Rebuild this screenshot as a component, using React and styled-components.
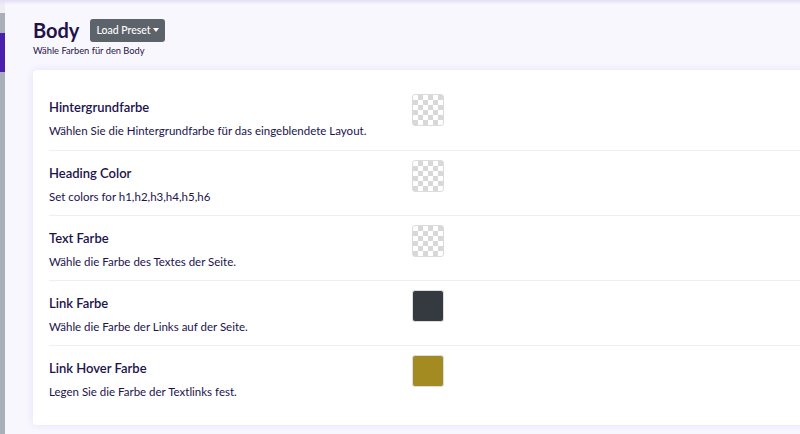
import React from "react";
import styled, { createGlobalStyle } from "styled-components";

const Global = createGlobalStyle`
  html, body {
    margin: 0;
    padding: 0;
    width: 800px;
    height: 434px;
    overflow: hidden;
    background: #f9f7fe;
    font-family: "Lato", "Open Sans", sans-serif;
  }
`;

const rows = [
  { title: "Hintergrundfarbe", text: "Wählen Sie die Hintergrundfarbe für das eingeblendete Layout.", color: null },
  { title: "Heading Color", text: "Set colors for h1,h2,h3,h4,h5,h6", color: null },
  { title: "Text Farbe", text: "Wähle die Farbe des Textes der Seite.", color: null },
  { title: "Link Farbe", text: "Wähle die Farbe der Links auf der Seite.", color: "#343a40" },
  { title: "Link Hover Farbe", text: "Legen Sie die Farbe der Textlinks fest.", color: "#a38a21" },
];

export default function App() {
  return (
    <>
      <Global />
      <Layout>
        <Sidebar>
          <div className="top" />
          <div className="gray" />
          <div className="active" />
          <div className="rest" />
        </Sidebar>
        <Main>
          <Header>
            <TitleRow>
              <h1>Body</h1>
              <PresetButton>
                Load Preset <span className="caret" />
              </PresetButton>
            </TitleRow>
            <Subtitle>Wähle Farben für den Body</Subtitle>
          </Header>
          <Card>
            {rows.map((r, i) => (
              <Row key={r.title} first={i === 0}>
                <Label>
                  <h3>{r.title}</h3>
                  <p>{r.text}</p>
                </Label>
                <Swatch color={r.color} />
              </Row>
            ))}
          </Card>
        </Main>
      </Layout>
    </>
  );
}

const Layout = styled.div`
  display: flex;
  width: 800px;
  height: 434px;
  position: relative;
  &::before {
    content: "";
    position: absolute;
    left: 0;
    right: 0;
    top: 0;
    height: 5px;
    background: linear-gradient(#e4def7, rgba(249, 247, 254, 0));
    z-index: 2;
  }
`;

const Sidebar = styled.div`
  width: 5px;
  flex-shrink: 0;
  display: flex;
  flex-direction: column;
  .top {
    height: 13px;
    background: #eeedf4;
  }
  .gray {
    height: 20px;
    background: #a8afb8;
  }
  .active {
    height: 39px;
    background: #4a1fae;
  }
  .rest {
    flex: 1;
    background: #a8afb8;
  }
`;

const Main = styled.div`
  flex: 1;
  padding: 17px 0 0 28px;
  min-width: 0;
`;

const Header = styled.div`
  color: #1f1249;
`;

const TitleRow = styled.div`
  display: flex;
  align-items: center;
  gap: 11px;
  h1 {
    margin: 0;
    font-size: 20px;
    font-weight: 700;
    line-height: 26px;
    color: #1f1249;
  }
`;

const PresetButton = styled.button`
  display: flex;
  align-items: center;
  gap: 2px;
  height: 23px;
  padding: 0 6px;
  border: none;
  border-radius: 3px;
  background: #5c636a;
  color: #fff;
  font-family: inherit;
  font-size: 10.5px;
  font-weight: 500;
  .caret {
    width: 0;
    height: 0;
    border-left: 3px solid transparent;
    border-right: 3px solid transparent;
    border-top: 4px solid #fff;
    margin-top: -1px;
  }
`;

const Subtitle = styled.div`
  font-size: 9.3px;
  margin-top: 2px;
  color: #1f1249;
`;

const Card = styled.div`
  margin-top: 14px;
  width: 790px;
  background: #fff;
  border-radius: 4px;
  box-shadow: 0 0 10px rgba(120, 90, 220, 0.14);
  padding: 15px 0 15px 16px;
`;

const Row = styled.div`
  display: grid;
  grid-template-columns: 363px 1fr;
  height: 65px;
  box-sizing: border-box;
  padding-top: 9px;
  border-top: ${(p) => (p.first ? "none" : "1px solid #efeef3")};
`;

const Label = styled.div`
  padding-top: 5px;
  color: #21124c;
  h3 {
    margin: 0;
    font-size: 13px;
    line-height: 16px;
    font-weight: 600;
  }
  p {
    margin: 9px 0 0;
    font-size: 11.5px;
    line-height: 14px;
  }
`;

const Swatch = styled.div`
  width: 30px;
  height: 30px;
  border-radius: 3px;
  border: 1px solid #dcdcdc;
  background: ${(p) =>
    p.color
      ? p.color
      : "repeating-conic-gradient(#d8d8d8 0 25%, #fff 0 50%) 0 0 / 10px 10px"};
`;
